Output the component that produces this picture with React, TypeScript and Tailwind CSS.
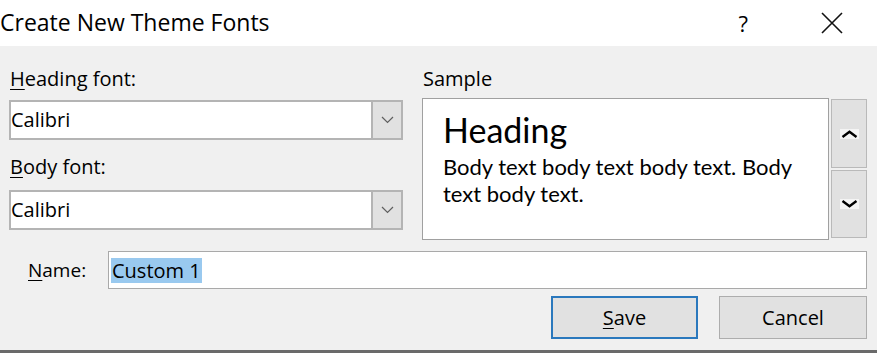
import React from 'react';

const ui = { fontFamily: '"Open Sans", "Noto Sans", sans-serif' };
const sample = { fontFamily: 'Lato, "Open Sans", sans-serif' };

function Chevron({ up = false }: { up?: boolean }) {
  return (
    <svg width="13" height="8" viewBox="0 0 13 8" className="block">
      <path
        d={up ? 'M1 7 L6.5 1.5 L12 7' : 'M1 1 L6.5 6.5 L12 1'}
        fill="none"
        stroke="#5f5f5f"
        strokeWidth="1.2"
      />
    </svg>
  );
}

function ScrollArrow({ up = false }: { up?: boolean }) {
  return (
    <div className="bg-[#f4f4f4] px-[1px] py-[1px]">
      <svg width="17" height="8" viewBox="0 0 17 8" className="block">
        <path
          d={up ? 'M1.5 7 L8.5 1.8 L15.5 7' : 'M1.5 1 L8.5 6.2 L15.5 1'}
          fill="none"
          stroke="#000"
          strokeWidth="2.4"
        />
      </svg>
    </div>
  );
}

function Combo({ value }: { value: string }) {
  return (
    <div className="flex h-[40px] border-2 border-[#b4b4b4] bg-white">
      <div className="flex flex-1 items-center text-[20px] text-black">{value}</div>
      <div className="flex w-[30px] items-center justify-center border-l-2 border-[#b4b4b4] bg-[#e1e1e1]">
        <Chevron />
      </div>
    </div>
  );
}

export default function App() {
  return (
    <div className="flex h-[353px] w-[877px] flex-col overflow-hidden bg-[#f0f0f0] text-black" style={ui}>
      {/* title bar */}
      <div className="flex h-[46px] items-center justify-between bg-white">
        <div className="text-[23px] leading-none pb-[1px]">Create New Theme Fonts</div>
        <div className="flex items-center">
          <span className="mr-[72px] text-[22px] leading-none">?</span>
          <svg width="24" height="22" viewBox="0 0 24 22" className="mr-[33px] block">
            <path d="M2 1 L22 21 M22 1 L2 21" stroke="#111" strokeWidth="1.6" fill="none" />
          </svg>
        </div>
      </div>

      <div className="flex flex-1 flex-col pl-[9px] pr-[10px]">
        <div className="flex gap-[19px] pt-[18px]">
          {/* left column */}
          <div className="flex w-[394px] flex-col">
            <div className="h-[36px] pl-[1px] text-[20px] leading-[30px]">
              <span className="underline underline-offset-[3px] decoration-1">H</span>eading font:
            </div>
            <Combo value="Calibri" />
            <div className="h-[50px] pl-[1px] pt-[12px] text-[20px] leading-[30px]">
              <span className="underline underline-offset-[3px] decoration-1">B</span>ody font:
            </div>
            <Combo value="Calibri" />
          </div>

          {/* sample */}
          <div className="flex flex-1 flex-col">
            <div className="h-[34px] pl-[1px] text-[20px] leading-[30px]">Sample</div>
            <div className="flex gap-[2px]">
              <div className="h-[142px] flex-1 border border-[#a0a0a0] bg-white pl-[20px] pt-[12px]" style={sample}>
                <div className="text-[34px] leading-[38px]">Heading</div>
                <div className="mt-[4px] text-[22px] leading-[27px]">
                  Body text body text body text. Body
                  <br />
                  text body text.
                </div>
              </div>
              <div className="flex w-[36px] flex-col gap-[2px] pt-[1px]">
                <div className="flex h-[69px] items-center justify-center border border-[#b9b9b9] bg-[#e1e1e1]">
                  <ScrollArrow up />
                </div>
                <div className="flex h-[68px] items-center justify-center border border-[#b9b9b9] bg-[#e1e1e1]">
                  <ScrollArrow />
                </div>
              </div>
            </div>
          </div>
        </div>

        {/* name row */}
        <div className="mt-[11px] flex items-center">
          <div className="w-[99px] pl-[19px] text-[19px]">
            <span className="underline underline-offset-[3px] decoration-1">N</span>ame:
          </div>
          <div className="flex h-[38px] flex-1 items-center border border-[#a9a9a9] bg-white pl-[2px]">
            <span className="bg-[#99c9ef] px-[1px] text-[20px] leading-[25px]">Custom 1</span>
          </div>
        </div>

        {/* buttons */}
        <div className="mt-[7px] flex justify-end gap-[21px]">
          <button className="h-[43px] w-[147px] border-2 border-[#2a78bd] bg-[#e1e1e1] text-[20px]" style={ui}>
            <span className="underline underline-offset-[3px] decoration-1">S</span>ave
          </button>
          <button className="h-[43px] w-[148px] border border-[#adadad] bg-[#e1e1e1] text-[20px]" style={ui}>
            Cancel
          </button>
        </div>
      </div>

      <div className="h-[3px] bg-[#6a6a6a]" />
    </div>
  );
}
